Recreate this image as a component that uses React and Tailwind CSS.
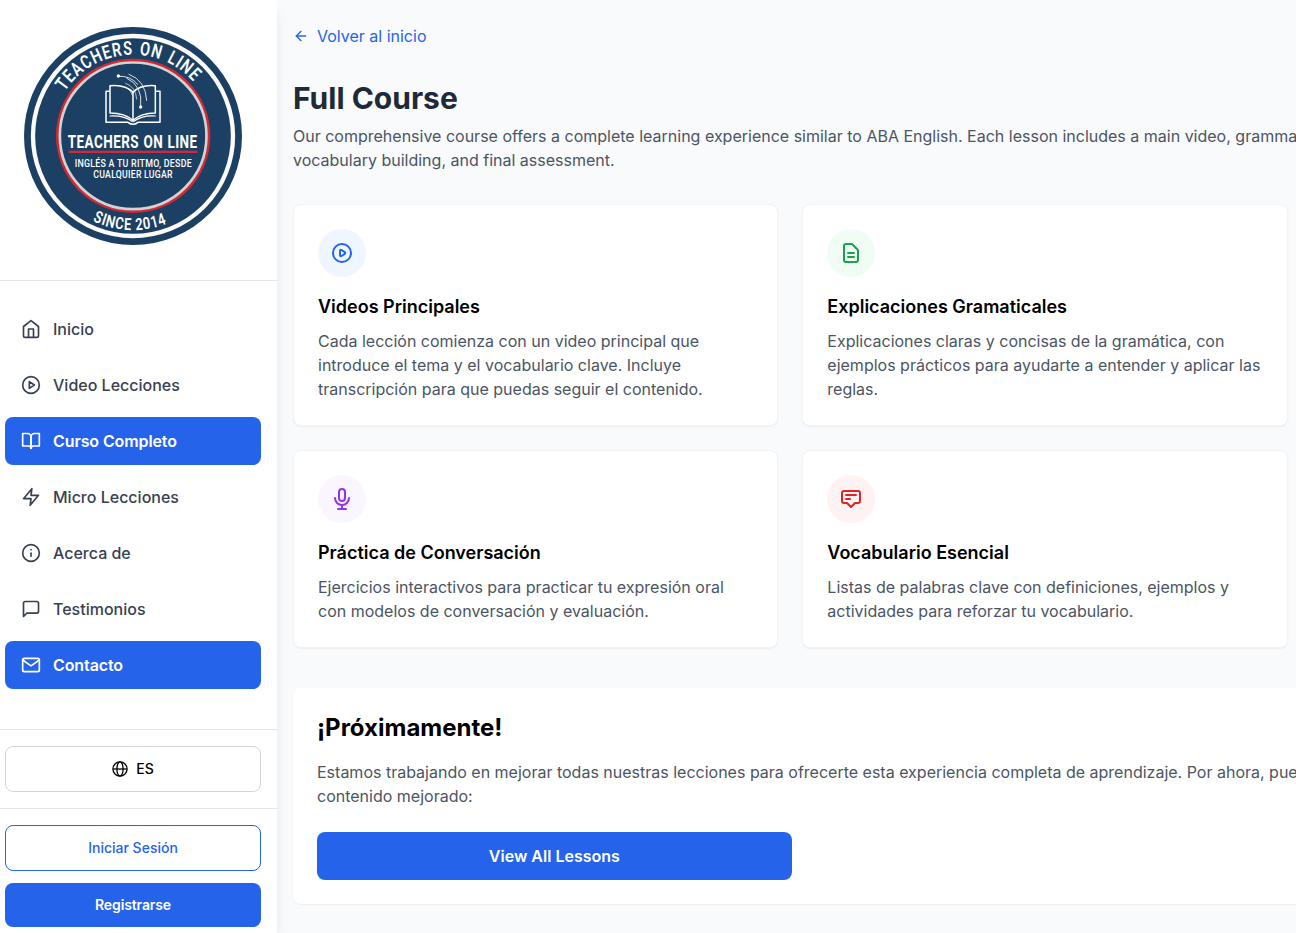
import {
  FiArrowLeft,
  FiBookOpen,
  FiHome,
  FiInfo,
  FiMail,
  FiMessageSquare,
  FiPlayCircle,
  FiZap,
} from 'react-icons/fi';

const navItems = [
  { label: 'Inicio', icon: FiHome },
  { label: 'Video Lecciones', icon: FiPlayCircle },
  { label: 'Curso Completo', icon: FiBookOpen, active: true },
  { label: 'Micro Lecciones', icon: FiZap },
  { label: 'Acerca de', icon: FiInfo },
  { label: 'Testimonios', icon: FiMessageSquare },
  { label: 'Contacto', icon: FiMail, active: true },
];

function Logo() {
  return (
    <svg viewBox="0 0 720 720" className="h-60 w-60" fontFamily="Roboto, sans-serif" fill="#ffffff">
      <defs>
        <path id="arc-top" d="M156 230 A243 243 0 0 1 603 363" />
        <path id="arc-bottom" d="M239 618 A282 282 0 0 0 642 363" />
      </defs>
      <circle cx="360" cy="363" r="327" fill="#1c4063" />
      <circle cx="360" cy="363" r="300" fill="none" stroke="#fbfaf6" strokeWidth="13" />
      <circle cx="360.5" cy="362.5" r="227.5" fill="none" stroke="#d8282f" strokeWidth="8" />
      <circle cx="360.5" cy="362.5" r="220" fill="none" stroke="#d3d3d6" strokeWidth="8" />
      <text fontSize="57" fontWeight="600" letterSpacing="4" wordSpacing="5">
        <textPath href="#arc-top" textLength="449" lengthAdjust="spacingAndGlyphs">TEACHERS ON LINE</textPath>
      </text>
      <text fontSize="50" fontWeight="600" letterSpacing="3">
        <textPath href="#arc-bottom" textLength="231" lengthAdjust="spacingAndGlyphs">SINCE 2014</textPath>
      </text>
      <text x="164" y="400" fontSize="57" fontWeight="700" letterSpacing="2" wordSpacing="2" textLength="390" lengthAdjust="spacingAndGlyphs">TEACHERS ON LINE</text>
      <rect x="167" y="407" width="386" height="7" fill="#c92d3c" />
      <text x="185" y="456" fontSize="35" fontWeight="500" letterSpacing="1" textLength="352" lengthAdjust="spacingAndGlyphs">INGLÉS A TU RITMO, DESDE</text>
      <text x="241" y="489" fontSize="35" fontWeight="500" letterSpacing="1" textLength="238" lengthAdjust="spacingAndGlyphs">CUALQUIER LUGAR</text>
      <g fill="none" stroke="#ffffff" strokeWidth="4.5" strokeLinejoin="round" strokeLinecap="round">
        <path d="M289 229H279V322H345Q360 334 375 322H441V229H431" />
        <path d="M291 212Q338 208 360 232Q382 208 427 212V294Q384 294 360 316Q336 294 291 294Z" />
        <path d="M360 232V316" />
        <path d="M291 303Q336 301 358 320M427 303Q384 301 362 320" strokeWidth="3.5" />
        <path d="M316 184Q352 181 374 208" strokeWidth="2.5" />
        <path d="M348 178Q398 196 401 256" strokeWidth="2.5" />
        <path d="M342 190Q390 212 383 274" strokeWidth="2.5" />
        <path d="M338 205Q369 216 371 252" strokeWidth="2" />
        <path d="M342 219Q356 228 358 240" strokeWidth="2" />
      </g>
      <circle cx="316" cy="183" r="5" />
      <circle cx="383" cy="276" r="5" />
    </svg>
  );
}

function GlobeIcon() {
  return (
    <svg viewBox="0 0 16 16" className="h-4 w-4" fill="none" stroke="currentColor" strokeWidth="1.3">
      <circle cx="8" cy="8" r="7.1" />
      <ellipse cx="8" cy="8" rx="3.1" ry="7.1" />
      <path d="M1 8h14" />
    </svg>
  );
}

function CardIcon({ children }) {
  return (
    <svg
      viewBox="0 0 24 24"
      className="h-6 w-6"
      fill="none"
      stroke="currentColor"
      strokeWidth="2"
      strokeLinejoin="round"
      strokeLinecap="round"
    >
      {children}
    </svg>
  );
}

const cards = [
  {
    title: 'Videos Principales',
    text: 'Cada lección comienza con un video principal que introduce el tema y el vocabulario clave. Incluye transcripción para que puedas seguir el contenido.',
    tone: 'bg-[#eff6ff] text-[#2563eb]',
    icon: (
      <CardIcon>
        <path d="M14.752 11.168l-3.197-2.132A1 1 0 0010 9.87v4.263a1 1 0 001.555.832l3.197-2.132a1 1 0 000-1.664z" />
        <path d="M21 12a9 9 0 11-18 0 9 9 0 0118 0z" />
      </CardIcon>
    ),
  },
  {
    title: 'Explicaciones Gramaticales',
    text: 'Explicaciones claras y concisas de la gramática, con ejemplos prácticos para ayudarte a entender y aplicar las reglas.',
    tone: 'bg-[#f0fdf4] text-[#16a34a]',
    icon: (
      <CardIcon>
        <path d="M9 12h6M9 16h6M17 21H7a2 2 0 0 1-2-2V5a2 2 0 0 1 2-2h5.586a1 1 0 0 1 .707.293l5.414 5.414a1 1 0 0 1 .293.707V19a2 2 0 0 1-2 2z" />
      </CardIcon>
    ),
  },
  null,
  {
    title: 'Práctica de Conversación',
    text: 'Ejercicios interactivos para practicar tu expresión oral con modelos de conversación y evaluación.',
    tone: 'bg-[#faf5ff] text-[#9333ea]',
    icon: (
      <CardIcon>
        <path d="M19 11a7 7 0 0 1-7 7m0 0a7 7 0 0 1-7-7m7 7v4m0 0H8m4 0h4m-4-8a3 3 0 0 1-3-3V5a3 3 0 1 1 6 0v6a3 3 0 0 1-3 3z" />
      </CardIcon>
    ),
  },
  {
    title: 'Vocabulario Esencial',
    text: 'Listas de palabras clave con definiciones, ejemplos y actividades para reforzar tu vocabulario.',
    tone: 'bg-[#fef2f2] text-[#dc2626]',
    icon: (
      <CardIcon>
        <path d="M7 8h10M7 12h4m1 8-4-4H5a2 2 0 0 1-2-2V6a2 2 0 0 1 2-2h14a2 2 0 0 1 2 2v8a2 2 0 0 1-2 2h-3l-4 4z" />
      </CardIcon>
    ),
  },
];

function Sidebar() {
  return (
    <aside className="z-10 flex w-[277px] shrink-0 flex-col bg-white shadow-lg">
      <div className="flex h-[281px] shrink-0 items-start border-b border-[#e5e7eb] pt-[15px] pl-[13px]">
        <Logo />
      </div>
      <nav className="flex flex-col gap-2 pt-6 pr-4 pb-10 pl-[5px]">
        {navItems.map(({ label, icon: Icon, active }) => (
          <a
            key={label}
            href="#"
            className={
              active
                ? 'flex h-12 items-center gap-3 rounded-lg bg-[#2563eb] px-4 font-semibold tracking-[-0.1px] text-white'
                : 'flex h-12 items-center gap-3 rounded-lg px-4 font-medium text-[#374151]'
            }
          >
            <Icon size={20} />
            <span>{label}</span>
          </a>
        ))}
      </nav>
      <div className="border-t border-[#e5e7eb] py-4 pr-4 pl-[5px]">
        <button className="flex h-[46px] w-full items-center justify-center gap-2 rounded-lg border border-[#d1d5db] text-sm font-medium text-black">
          <GlobeIcon />
          <span>ES</span>
        </button>
      </div>
      <div className="flex flex-col gap-3 border-t border-[#e5e7eb] pt-4 pr-4 pl-[5px]">
        <button className="h-[46px] rounded-lg border border-[#2563eb] text-sm font-medium text-[#2563eb]">Iniciar Sesión</button>
        <button className="h-11 rounded-lg bg-[#2563eb] text-sm font-semibold tracking-[-0.12px] text-white">Registrarse</button>
      </div>
    </aside>
  );
}

export default function App() {
  return (
    <div className="flex h-[933px] w-full overflow-hidden bg-[#f9fafb] font-['Inter',sans-serif] text-base text-black">
      <Sidebar />
      <main className="w-[1536px] shrink-0 px-4 pt-6">
        <a href="#" className="mb-8 flex h-6 items-center gap-2 text-[#2563eb]">
          <FiArrowLeft size={16} />
          <span>Volver al inicio</span>
        </a>
        <h1 className="mb-2 text-3xl font-bold text-[#1f2937]">Full Course</h1>
        <p className="mb-8 text-[#4b5563]">
          Our comprehensive course offers a complete learning experience similar to ABA English. Each lesson includes a main video, grammar explanations,
          <br />
          vocabulary building, and final assessment.
        </p>
        <div className="mb-10 grid grid-cols-3 gap-6">
          {cards.map((card, i) =>
            card ? (
              <section key={card.title} className="rounded-lg border border-[#f3f4f6] bg-white p-6 shadow-[0_1px_2px_0_rgba(0,0,0,0.05)]">
                <div className={`mb-4 flex h-12 w-12 items-center justify-center rounded-full ${card.tone}`}>{card.icon}</div>
                <h3 className="mb-2 text-lg font-semibold">{card.title}</h3>
                <p className="text-[#4b5563]">{card.text}</p>
              </section>
            ) : (
              <div key={i} />
            ),
          )}
        </div>
        <section className="rounded-lg bg-white p-6 shadow-[0_1px_2px_0_rgba(0,0,0,0.05)]">
          <h2 className="mb-4 text-2xl font-bold">¡Próximamente!</h2>
          <p className="mb-6 text-[#4b5563]">
            Estamos trabajando en mejorar todas nuestras lecciones para ofrecerte esta experiencia completa de aprendizaje. Por ahora, puedes explorar el
            <br />
            contenido mejorado:
          </p>
          <div className="grid grid-cols-3 gap-4">
            <button className="h-12 rounded-lg bg-[#2563eb] font-semibold text-white">View All Lessons</button>
          </div>
        </section>
      </main>
    </div>
  );
}
